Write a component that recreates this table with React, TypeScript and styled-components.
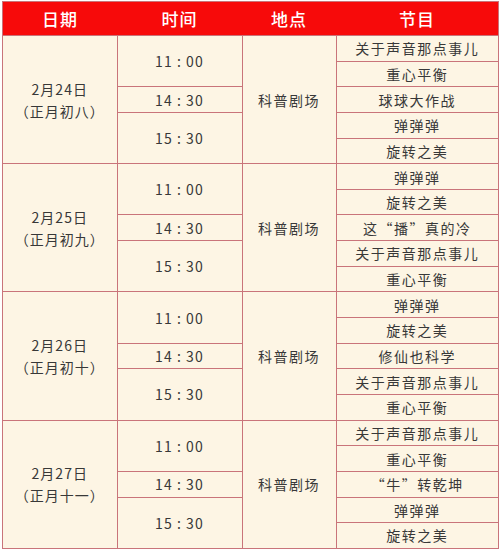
import styled, { createGlobalStyle } from "styled-components";

const GlobalStyle = createGlobalStyle`
  html, body {
    margin: 0;
    padding: 0;
    background: #ffffff;
  }
  body {
    font-family: "Noto Sans CJK SC", "Noto Sans", sans-serif;
  }
`;

const Page = styled.div`
  padding: 1px 0 0 2px;
`;

const Table = styled.table`
  width: 495px;
  border-collapse: collapse;
  table-layout: fixed;
  background: #fdf5e4;
  border: 1.5px solid #c9747a;
`;

const HeadCell = styled.th<{ $w: number }>`
  width: ${(p) => p.$w}px;
  height: 33px;
  padding: 0;
  background: #f70a0a;
  color: #ffffff;
  font-size: 17px;
  font-weight: 500;
  letter-spacing: 1px;
  text-align: center;
  border: none;
`;

const Row = styled.tr`
  height: 25.65px;
`;

const Cell = styled.td`
  padding: 0;
  border: 1px solid #c9747a;
  color: #383838;
  font-size: 14px;
  letter-spacing: 1.5px;
  text-align: center;
  vertical-align: middle;
  line-height: 20px;
`;

const TimeCell = styled(Cell)`
  letter-spacing: 1.2px;
`;

const DateCell = styled(Cell)`
  line-height: 22px;
  letter-spacing: 1px;
`;

interface IDay {
  date: string;
  lunar: string;
  shows: string[];
}

const days: IDay[] = [
  {
    date: "2月24日",
    lunar: "（正月初八）",
    shows: ["关于声音那点事儿", "重心平衡", "球球大作战", "弹弹弹", "旋转之美"],
  },
  {
    date: "2月25日",
    lunar: "（正月初九）",
    shows: ["弹弹弹", "旋转之美", "这“播”真的冷", "关于声音那点事儿", "重心平衡"],
  },
  {
    date: "2月26日",
    lunar: "（正月初十）",
    shows: ["弹弹弹", "旋转之美", "修仙也科学", "关于声音那点事儿", "重心平衡"],
  },
  {
    date: "2月27日",
    lunar: "（正月十一）",
    shows: ["关于声音那点事儿", "重心平衡", "“牛”转乾坤", "弹弹弹", "旋转之美"],
  },
];

function DayRows({ day }: { day: IDay }) {
  const [a, b, c, d, e] = day.shows;
  return (
    <>
      <Row>
        <DateCell rowSpan={5}>
          {day.date}
          <br />
          {day.lunar}
        </DateCell>
        <TimeCell rowSpan={2}>11{"\u2009"}:{"\u2009"}00</TimeCell>
        <Cell rowSpan={5}>科普剧场</Cell>
        <Cell>{a}</Cell>
      </Row>
      <Row>
        <Cell>{b}</Cell>
      </Row>
      <Row>
        <TimeCell>14{"\u2009"}:{"\u2009"}30</TimeCell>
        <Cell>{c}</Cell>
      </Row>
      <Row>
        <TimeCell rowSpan={2}>15{"\u2009"}:{"\u2009"}30</TimeCell>
        <Cell>{d}</Cell>
      </Row>
      <Row>
        <Cell>{e}</Cell>
      </Row>
    </>
  );
}

export default function App() {
  return (
    <Page>
      <GlobalStyle />
      <Table>
        <thead>
          <tr>
            <HeadCell $w={114}>日期</HeadCell>
            <HeadCell $w={125}>时间</HeadCell>
            <HeadCell $w={94}>地点</HeadCell>
            <HeadCell $w={162}>节目</HeadCell>
          </tr>
        </thead>
        <tbody>
          {days.map((day) => (
            <DayRows key={day.date} day={day} />
          ))}
        </tbody>
      </Table>
    </Page>
  );
}
